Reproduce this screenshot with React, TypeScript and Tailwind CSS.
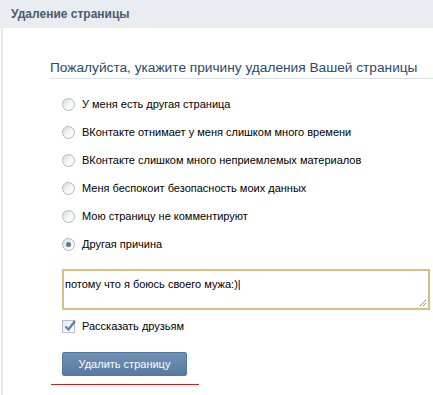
import React from "react";

const reasons = [
  "У меня есть другая страница",
  "ВКонтакте отнимает у меня слишком много времени",
  "ВКонтакте слишком много неприемлемых материалов",
  "Меня беспокоит безопасность моих данных",
  "Мою страницу не комментируют",
  "Другая причина",
];

const Radio = ({ checked }: { checked: boolean }) => (
  <span className="w-[13px] h-[13px] rounded-full border border-[#b3b8bd] bg-gradient-to-br from-[#dcdcd6] via-[#f4f4f0] to-white flex items-center justify-center shrink-0">
    {checked && <span className="w-[5px] h-[5px] rounded-full bg-[#4f7aa8]" />}
  </span>
);

export default function App() {
  const [selected, setSelected] = React.useState(5);

  return (
    <div className="w-[433px] h-[395px] bg-white overflow-hidden font-['Liberation_Sans',Arial,sans-serif] text-[11px] text-black">
      <div className="h-[28px] bg-[#e9edf1] pl-[11px] flex items-center font-bold text-[#4a5b6d] text-[12px]">
        Удаление страницы
      </div>

      <div className="ml-px border-l-2 border-[#e6e8eb] pl-[47px] pt-[31px] h-[367px]">
        <div className="h-[20px] border-b border-[#dae1e8] text-[13.7px] leading-[17px] text-[#2b4a6b]">
          Пожалуйста, укажите причину удаления Вашей страницы
        </div>

        <div className="mt-[11px] pl-[12px]">
          {reasons.map((r, i) => (
            <div
              key={i}
              onClick={() => setSelected(i)}
              className="h-[28px] flex items-center gap-[7px] cursor-pointer"
            >
              <Radio checked={selected === i} />
              <span>{r}</span>
            </div>
          ))}

          <div className="mt-[11px] w-[368px] h-[41px] border-2 border-[#d9bf84] relative px-[1px] pt-[6px] leading-[14px]">
            потому что я боюсь своего мужа:)<span className="text-black">|</span>
            <svg
              className="absolute right-[1px] bottom-[1px]"
              width="9"
              height="9"
              viewBox="0 0 9 9"
            >
              <path d="M8 2 L2 8 M8 5 L5 8" stroke="#8a8a8a" strokeWidth="1" />
            </svg>
          </div>

          <div className="mt-[10px] h-[13px] flex items-center gap-[7px]">
            <span className="w-[13px] h-[13px] border border-[#b5c0cc] bg-gradient-to-br from-[#e6eaee] to-white relative shrink-0">
              <svg
                className="absolute left-[1px] top-[-2px]"
                width="12"
                height="13"
                viewBox="0 0 12 13"
              >
                <path
                  d="M1.5 7.5 L4.5 10.5 L11 2"
                  fill="none"
                  stroke="#5a80aa"
                  strokeWidth="2.2"
                />
              </svg>
            </span>
            <span>Рассказать друзьям</span>
          </div>

          <button className="mt-[19px] w-[125px] h-[24px] rounded-[2px] border border-[#54779e] bg-gradient-to-b from-[#7193b8] to-[#5879a0] text-white text-[11px] flex items-center justify-center">
            Удалить страницу
          </button>
        </div>

        <div className="mt-[8px] ml-px w-[148px] h-px bg-[#d21a1a]" />
      </div>
    </div>
  );
}
